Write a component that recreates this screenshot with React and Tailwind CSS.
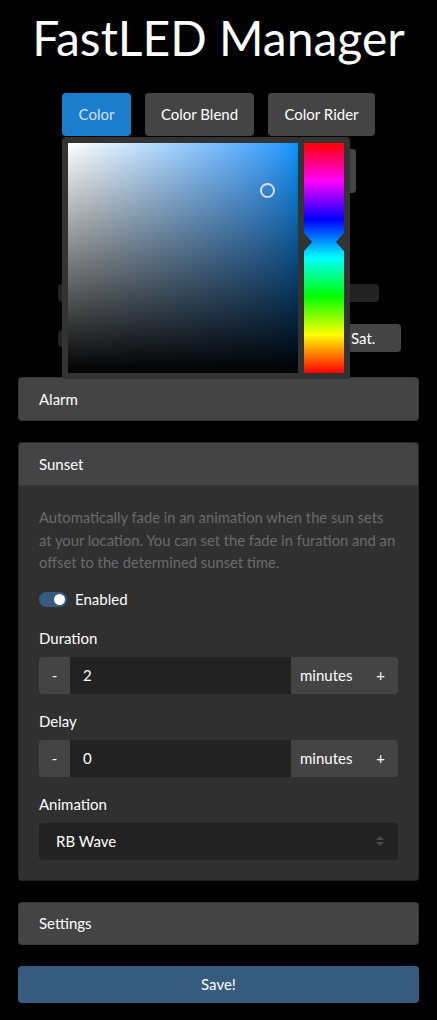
import React from 'react';

const font = { fontFamily: 'Lato, "Open Sans", sans-serif' };

function InputGroup({ value }) {
  return (
    <div className="flex h-[37px] w-full rounded-[4px] overflow-hidden">
      <div className="w-[31px] bg-[#444] flex items-center justify-center text-[15px] text-white">-</div>
      <div className="flex-1 bg-[#222] flex items-center pl-[13px] text-[15px] text-white">{value}</div>
      <div className="w-[107px] bg-[#444] flex items-center justify-between pl-[9px] pr-[13px] text-[15px] text-white">
        <span>minutes</span>
        <span>+</span>
      </div>
    </div>
  );
}

function ColorPicker() {
  return (
    <div className="absolute left-[44px] top-[1px] w-[288px] h-[242px] bg-[#333] rounded-[4px] p-[6px] flex gap-[6px]">
      {/* saturation / value square */}
      <div className="relative w-[230px] h-[230px] bg-linear-to-r from-white to-[#0095ff]">
        <div className="absolute inset-0 bg-linear-to-t from-black to-transparent" />
        <div className="absolute left-[192px] top-[40px] w-[15px] h-[15px] rounded-full border-2 border-[#dcdcdc]" />
      </div>
      {/* hue strip */}
      <div className="relative w-[40px] h-[230px] bg-[linear-gradient(to_bottom,#f00,#f0f,#00f,#0ff,#0f0,#ff0,#f00)]">
        <svg className="absolute left-0 top-[90px]" width="40" height="18" viewBox="0 0 40 18">
          <polygon points="0,0 8,9 0,18" fill="#333" />
          <polygon points="40,0 32,9 40,18" fill="#333" />
        </svg>
      </div>
    </div>
  );
}

export default function App() {
  return (
    <div className="min-h-[1020px] bg-black text-white px-[18px]" style={font}>
      <h1 className="pt-[9px] text-center text-[48px] leading-[58px] font-normal">FastLED Manager</h1>

      {/* tabs */}
      <div className="mt-[26px] flex justify-center gap-[14px] text-[15px]">
        <div className="h-[43px] w-[69px] rounded-[4px] bg-[#1b7dcb] text-[#d2e2f2] flex items-center justify-center">Color</div>
        <div className="h-[43px] w-[109px] rounded-[4px] bg-[#444] flex items-center justify-center">Color Blend</div>
        <div className="h-[43px] w-[107px] rounded-[4px] bg-[#444] flex items-center justify-center">Color Rider</div>
      </div>

      {/* tab content, partly covered by the picker */}
      <div className="relative h-[241px]">
        <div className="pt-[13px] flex justify-end pr-[63px]">
          <div className="w-[40px] h-[44px] rounded-[4px] bg-[#444]" />
        </div>
        <div className="mt-[91px] ml-[40px] mr-[40px] h-[18px] rounded-[4px] bg-[#222]" />
        <div className="mt-[22px] ml-[40px] mr-[18px] flex items-center justify-between">
          <div className="w-[60px] h-[17px] rounded-[4px] bg-[#222]" />
          <div className="w-[56px] h-[28px] rounded-[4px] bg-[#444] flex items-center pl-[6px] text-[15px]">Sat.</div>
        </div>
        <ColorPicker />
      </div>

      {/* Alarm */}
      <div className="h-[44px] rounded-[4px] bg-[#444] border border-black/20 flex items-center px-[20px] text-[15px]">Alarm</div>

      {/* Sunset */}
      <div className="mt-[21px] rounded-[4px] bg-[#303030] border border-black/20 overflow-hidden">
        <div className="h-[43px] bg-[#444] border-b border-black/20 flex items-center px-[20px] text-[15px]">Sunset</div>
        <div className="px-[20px] pt-[20px] pb-[20px] text-[15px]">
          <p className="leading-[22.5px] text-[14.75px] text-[#6b6b6b]">
            Automatically fade in an animation when the sun sets at your location. You can set the fade in furation and an offset to the determined sunset time.
          </p>
          <div className="mt-[15px] flex items-center gap-[8px] h-[22px]">
            <div className="w-[28px] h-[15px] rounded-full bg-[#375a7f] flex items-center justify-end pr-[2px]">
              <div className="w-[11px] h-[11px] rounded-full bg-white" />
            </div>
            <span>Enabled</span>
          </div>
          <div className="mt-[16px] leading-[22px]">Duration</div>
          <div className="mt-[8px]"><InputGroup value="2" /></div>
          <div className="mt-[16px] leading-[22px]">Delay</div>
          <div className="mt-[8px]"><InputGroup value="0" /></div>
          <div className="mt-[16px] leading-[22px]">Animation</div>
          <div className="mt-[8px] h-[37px] rounded-[4px] bg-[#222] flex items-center justify-between pl-[17px] pr-[14px]">
            <span>RB Wave</span>
            <svg width="8" height="12" viewBox="0 0 8 12">
              <polygon points="0,5 4,1 8,5" fill="#4a4a4a" />
              <polygon points="0,7 4,11 8,7" fill="#4a4a4a" />
            </svg>
          </div>
        </div>
      </div>

      {/* Settings */}
      <div className="mt-[21px] h-[43px] rounded-[4px] bg-[#444] border border-black/20 flex items-center px-[20px] text-[15px]">Settings</div>

      <button className="mt-[21px] w-full h-[37px] rounded-[4px] bg-[#375a7f] text-[15px] text-white flex items-center justify-center">Save!</button>
    </div>
  );
}
